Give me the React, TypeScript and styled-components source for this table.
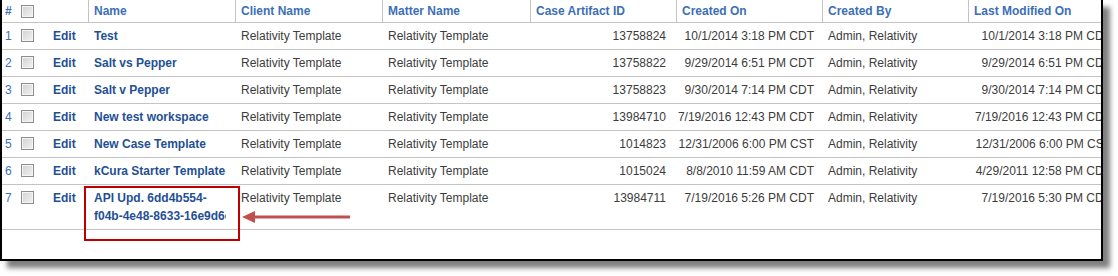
import React from 'react';
import styled, { createGlobalStyle } from 'styled-components';

interface Workspace {
  name: string;
  tail?: string;
  client: string;
  matter: string;
  artifactId: string;
  createdOn: string;
  createdBy: string;
  modifiedOn: string;
}

const rows: Workspace[] = [
  { name: 'Test', client: 'Relativity Template', matter: 'Relativity Template', artifactId: '13758824', createdOn: '10/1/2014 3:18 PM CDT', createdBy: 'Admin, Relativity', modifiedOn: '10/1/2014 3:18 PM CDT' },
  { name: 'Salt vs Pepper', client: 'Relativity Template', matter: 'Relativity Template', artifactId: '13758822', createdOn: '9/29/2014 6:51 PM CDT', createdBy: 'Admin, Relativity', modifiedOn: '9/29/2014 6:51 PM CDT' },
  { name: 'Salt v Pepper', client: 'Relativity Template', matter: 'Relativity Template', artifactId: '13758823', createdOn: '9/30/2014 7:14 PM CDT', createdBy: 'Admin, Relativity', modifiedOn: '9/30/2014 7:14 PM CDT' },
  { name: 'New test workspace', client: 'Relativity Template', matter: 'Relativity Template', artifactId: '13984710', createdOn: '7/19/2016 12:43 PM CDT', createdBy: 'Admin, Relativity', modifiedOn: '7/19/2016 12:43 PM CDT' },
  { name: 'New Case Template', client: 'Relativity Template', matter: 'Relativity Template', artifactId: '1014823', createdOn: '12/31/2006 6:00 PM CST', createdBy: 'Admin, Relativity', modifiedOn: '12/31/2006 6:00 PM CST' },
  { name: 'kCura Starter Template', client: 'Relativity Template', matter: 'Relativity Template', artifactId: '1015024', createdOn: '8/8/2010 11:59 AM CDT', createdBy: 'Admin, Relativity', modifiedOn: '4/29/2011 12:58 PM CDT' },
  { name: 'API Upd. 6dd4b554-', tail: 'f04b-4e48-8633-16e9d6c1b2a0', client: 'Relativity Template', matter: 'Relativity Template', artifactId: '13984711', createdOn: '7/19/2016 5:26 PM CDT', createdBy: 'Admin, Relativity', modifiedOn: '7/19/2016 5:30 PM CDT' },
];

// column widths, last one runs past the frame and gets clipped
const widths = [15, 27, 44, 147, 147, 148, 146, 146, 146, 151];

const GlobalStyle = createGlobalStyle`
  body {
    margin: 0;
    background: #fff;
    font-family: "Liberation Sans", Arial, sans-serif;
  }
`;

const Page = styled.div`
  width: 1118px;
  height: 276px;
  overflow: hidden;
`;

const Frame = styled.div`
  position: relative;
  width: 1103px;
  height: 261px;
  box-sizing: border-box;
  border: 2px solid #000;
  border-top: none;
  background: #fff;
  overflow: hidden;
  box-shadow: 7px 7px 5px rgba(0, 0, 0, 0.5);
`;

const Grid = styled.table`
  table-layout: fixed;
  width: 1117px;
  border-collapse: separate;
  border-spacing: 0;
  font-size: 12px;
  line-height: 18px;
  color: #3c3c3c;
`;

const Head = styled.th<{ $sep?: boolean; $pad?: string }>`
  padding: ${(p) => p.$pad || '2px 6px'};
  text-align: left;
  font-weight: bold;
  color: #3d6fb6;
  border-bottom: 1px solid #c4c4c4;
  box-shadow: ${(p) => (p.$sep ? 'inset 1px 0 0 #c4c4c4' : 'none')};
  white-space: nowrap;
  overflow: hidden;
  vertical-align: top;
`;

const Cell = styled.td<{ $right?: boolean; $pad?: string }>`
  padding: ${(p) => p.$pad || '4px 6px'};
  text-align: ${(p) => (p.$right ? 'right' : 'left')};
  border-bottom: 1px solid #c4c4c4;
  vertical-align: top;
  white-space: nowrap;
  overflow: hidden;
`;

const RowNum = styled.span`
  color: #3d6fb6;
`;

const Link = styled.a`
  color: #1f4f95;
  font-weight: bold;
  text-decoration: none;
`;

const NameBox = styled.div`
  white-space: normal;
  overflow: hidden;
  margin-right: 3px;
`;

const NoBreak = styled.span`
  white-space: nowrap;
`;

const Check = styled.span<{ $top?: number }>`
  display: inline-block;
  width: 13px;
  height: 13px;
  box-sizing: border-box;
  margin-top: ${(p) => p.$top ?? 2}px;
  vertical-align: top;
  border: 1px solid #8e8e8e;
  box-shadow: inset 0 0 0 1px #f4f4f4;
  background: linear-gradient(135deg, #d2d2d2, #f2f2f2);
`;

const Highlight = styled.div`
  position: absolute;
  left: 82px;
  top: 186px;
  width: 156px;
  height: 55px;
  box-sizing: border-box;
  border: 2px solid #c00000;
`;

const Arrow = styled.svg`
  position: absolute;
  left: 239px;
  top: 209px;
`;

export default function App() {
  return (
    <Page>
      <GlobalStyle />
      <Frame>
        <Grid>
          <colgroup>
            {widths.map((w, i) => (
              <col key={i} style={{ width: w }} />
            ))}
          </colgroup>
          <thead>
            <tr>
              <Head $pad="2px 0 2px 3px">#</Head>
              <Head $pad="2px 0 2px 4px">
                <Check $top={3} />
              </Head>
              <Head />
              <Head $sep>Name</Head>
              <Head $sep>Client Name</Head>
              <Head $sep>Matter Name</Head>
              <Head $sep>Case Artifact ID</Head>
              <Head $sep>Created On</Head>
              <Head $sep>Created By</Head>
              <Head $sep>Last Modified On</Head>
            </tr>
          </thead>
          <tbody>
            {rows.map((r, i) => (
              <tr key={i}>
                <Cell $pad="4px 0 4px 3px">
                  <RowNum>{i + 1}</RowNum>
                </Cell>
                <Cell $pad="4px 0 4px 4px">
                  <Check />
                </Cell>
                <Cell $pad="4px 0 4px 9px">
                  <Link>Edit</Link>
                </Cell>
                <Cell>
                  <NameBox>
                    <Link>
                      {r.name}
                      {r.tail && <NoBreak>{r.tail}</NoBreak>}
                    </Link>
                  </NameBox>
                </Cell>
                <Cell>{r.client}</Cell>
                <Cell>{r.matter}</Cell>
                <Cell $right $pad="4px 10px 4px 6px">{r.artifactId}</Cell>
                <Cell $right $pad="4px 8px 4px 0">{r.createdOn}</Cell>
                <Cell>{r.createdBy}</Cell>
                <Cell $right $pad="4px 8px 4px 0">{r.modifiedOn}</Cell>
              </tr>
            ))}
          </tbody>
        </Grid>
        <Highlight />
        <Arrow width="112" height="16" viewBox="0 0 112 16">
          <line x1="12" y1="8" x2="109" y2="8" stroke="#c0504d" strokeWidth="3" />
          <polygon points="1,8 14,2 14,14" fill="#c0504d" />
        </Arrow>
      </Frame>
    </Page>
  );
}
